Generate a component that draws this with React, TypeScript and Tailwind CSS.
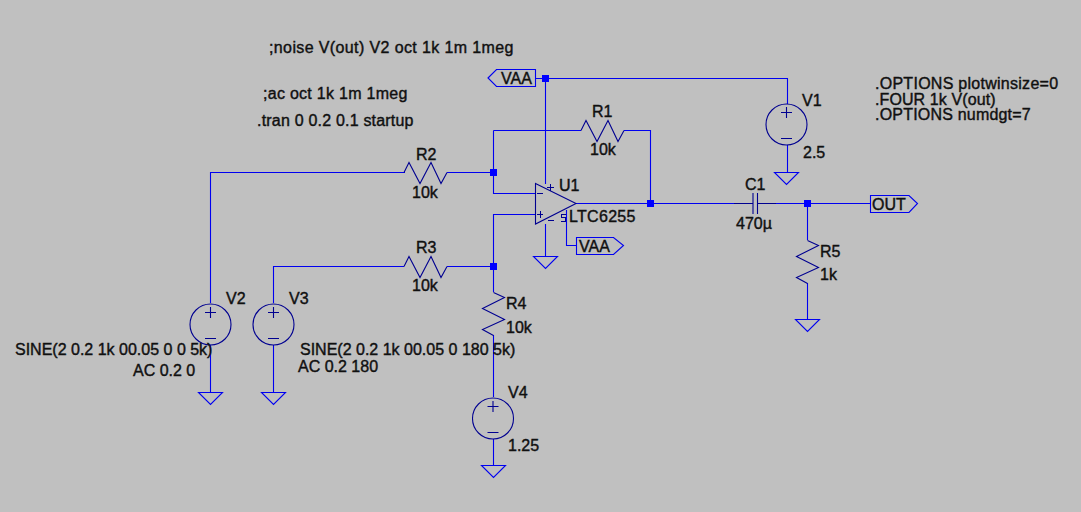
import React from 'react';

const wires = [
  '488,78.5 787.5,78.5 787.5,104',
  '545.5,78.5 545.5,184',
  '493.5,130.5 581,130.5',
  '624,130.5 650.5,130.5 650.5,203.5',
  '493.5,130.5 493.5,193.5 535,193.5',
  '210.5,303 210.5,172.5 405,172.5',
  '447,172.5 493.5,172.5',
  '535,214.5 493.5,214.5 493.5,292',
  '273.5,303 273.5,266.5 404,266.5',
  '447,266.5 493.5,266.5',
  '576,203.5 734,203.5',
  '776,203.5 870,203.5',
  '807.5,203.5 807.5,240',
  '807.5,283 807.5,319',
  '493.5,335 493.5,397',
  '493.5,439 493.5,465',
  '787.5,145 787.5,172',
  '210.5,345 210.5,392',
  '273.5,345 273.5,392',
  '545.5,224 545.5,256',
  '566.5,210 566.5,245.5 576,245.5',
];

const dots = [
  [545.5, 78.5],
  [493.5, 172.5],
  [650.5, 203.5],
  [493.5, 266.5],
  [807.5, 203.5],
];

const grounds = [
  [786.5, 172.5],
  [545.5, 256.5],
  [807.5, 319.5],
  [210.5, 392.5],
  [273.5, 392.5],
  [493.5, 465.5],
];

const sources = [
  [786.5, 124.5],
  [210.5, 324.5],
  [273.5, 324.5],
  [493, 418.5],
];

function HRes({ x, y }: { x: number; y: number }) {
  const pts = [
    [0, 0],
    [5, -10],
    [16, 11],
    [27, -10],
    [37, 11],
    [43, 0],
  ];
  return (
    <polyline
      points={pts.map(([a, b]) => `${x + a},${y + b}`).join(' ')}
      fill="none"
      stroke="#000090"
      strokeWidth={1.1}
    />
  );
}

function VRes({ x, y }: { x: number; y: number }) {
  const pts = [
    [0, 0],
    [11, 5],
    [-11, 16],
    [11, 27],
    [-11, 37],
    [0, 43],
  ];
  return (
    <polyline
      points={pts.map(([a, b]) => `${x + a},${y + b}`).join(' ')}
      fill="none"
      stroke="#000090"
      strokeWidth={1.1}
    />
  );
}

function Schematic() {
  return (
    <svg className="absolute inset-0" width={1081} height={512} viewBox="0 0 1081 512">
      {wires.map((points) => (
        <polyline key={points} points={points} fill="none" stroke="#0000f0" strokeWidth={1.1} />
      ))}
      {dots.map(([x, y]) => (
        <rect key={`${x}-${y}`} x={x - 3.5} y={y - 3.5} width={7} height={7} fill="#0000ff" />
      ))}
      {grounds.map(([x, y]) => (
        <polygon key={`${x}-${y}`} points={`${x - 12},${y} ${x + 12},${y} ${x},${y + 12}`} fill="none" stroke="#0000f0" strokeWidth={1.1} />
      ))}
      {sources.map(([x, y]) => (
        <g key={`${x}-${y}`} fill="none" stroke="#000090" strokeWidth={1.1}>
          <circle cx={x} cy={y} r={20.5} />
          <path d={`M${x - 5.5} ${y - 12}H${x + 5.5}M${x} ${y - 17.5}V${y - 6.5}M${x - 5.5} ${y + 14}H${x + 5.5}`} />
        </g>
      ))}
      <HRes x={581} y={130.5} />
      <HRes x={404} y={172.5} />
      <HRes x={404} y={266.5} />
      <VRes x={493.5} y={292.5} />
      <VRes x={807.5} y={240.5} />

      {/* op amp */}
      <polygon points="535.5,183.5 576,203.5 535.5,224" fill="none" stroke="#000090" strokeWidth={1.1} />
      <path
        d="M537 193.5H543M537 214.5H543M540.5 211V218M547 187.5H554M550.5 184V191M548 220.5H554"
        stroke="#000090"
        shapeRendering="crispEdges"
      />
      <path d="M565.5 214.5H561.5V217.5H565.5V221.5H561" fill="none" stroke="#000090" shapeRendering="crispEdges" />

      {/* capacitor */}
      <path d="M753 193V214M757.5 193V214" stroke="#000090" strokeWidth={1.1} fill="none" />
      <path d="M734 203.5H753M757.5 203.5H776" stroke="#000090" strokeWidth={1.1} fill="none" />

      {/* net flags */}
      <polygon points="488,78 496.5,69.5 535.5,69.5 535.5,86.5 496.5,86.5" fill="#c0c0c0" stroke="#0000f0" strokeWidth={1.1} />
      <polygon points="576.5,237.5 613.5,237.5 623.5,245.5 613.5,254.5 576.5,254.5" fill="#c0c0c0" stroke="#0000f0" strokeWidth={1.1} />
      <polygon points="870.5,195.5 909,195.5 917.5,203.5 909,212.5 870.5,212.5" fill="#c0c0c0" stroke="#0000f0" strokeWidth={1.1} />
    </svg>
  );
}

function Label({ className, children }: { className: string; children: React.ReactNode }) {
  return (
    <span className={`absolute whitespace-nowrap text-[16px] leading-[20px] text-[#101010] [-webkit-text-stroke:0.4px_#101010] ${className}`}>
      {children}
    </span>
  );
}

export default function App() {
  return (
    <div className="relative h-[512px] w-[1081px] overflow-hidden bg-[#c0c0c0] font-['Liberation_Sans',Arial,sans-serif]">
      <Schematic />
      <Label className="left-[269px] top-[38px] tracking-[0.38px]">;noise V(out) V2 oct 1k 1m 1meg</Label>
      <Label className="left-[263px] top-[84px] tracking-[0.28px]">;ac oct 1k 1m 1meg</Label>
      <Label className="left-[257px] top-[111px] tracking-[0.2px]">.tran 0 0.2 0.1 startup</Label>
      <Label className="left-[501px] top-[69px]">VAA</Label>
      <Label className="left-[592px] top-[102px]">R1</Label>
      <Label className="left-[590px] top-[140px]">10k</Label>
      <Label className="left-[559px] top-[176px]">U1</Label>
      <Label className="left-[569px] top-[207px] tracking-[0.3px]">LTC6255</Label>
      <Label className="left-[579px] top-[237px]">VAA</Label>
      <Label className="left-[802px] top-[91px]">V1</Label>
      <Label className="left-[803px] top-[143px]">2.5</Label>
      <Label className="left-[745px] top-[175px]">C1</Label>
      <Label className="left-[736px] top-[214px]">470µ</Label>
      <Label className="left-[872px] top-[195px]">OUT</Label>
      <Label className="left-[820px] top-[242px]">R5</Label>
      <Label className="left-[820px] top-[265px]">1k</Label>
      <Label className="left-[416px] top-[145px]">R2</Label>
      <Label className="left-[412px] top-[183px]">10k</Label>
      <Label className="left-[416px] top-[238px]">R3</Label>
      <Label className="left-[412px] top-[276px]">10k</Label>
      <Label className="left-[506px] top-[294px]">R4</Label>
      <Label className="left-[506px] top-[318px]">10k</Label>
      <Label className="left-[226px] top-[289px]">V2</Label>
      <Label className="left-[289px] top-[289px]">V3</Label>
      <Label className="left-[508px] top-[383px]">V4</Label>
      <Label className="left-[508px] top-[436px]">1.25</Label>
      <Label className="left-[15px] top-[340px]">SINE(2 0.2 1k 00.05 0 0 5k)</Label>
      <Label className="left-[133px] top-[361px]">AC 0.2 0</Label>
      <Label className="left-[300px] top-[340px]">SINE(2 0.2 1k 00.05 0 180 5k)</Label>
      <Label className="left-[298px] top-[357px]">AC 0.2 180</Label>
      <div className="absolute left-[875px] top-[76px] flex flex-col whitespace-nowrap text-[16px] leading-[15.5px] text-[#101010] [-webkit-text-stroke:0.4px_#101010]">
        <span className="tracking-[0.27px]">.OPTIONS plotwinsize=0</span>
        <span className="tracking-[0.1px]">.FOUR 1k V(out)</span>
        <span className="tracking-[0.2px]">.OPTIONS numdgt=7</span>
      </div>
    </div>
  );
}
